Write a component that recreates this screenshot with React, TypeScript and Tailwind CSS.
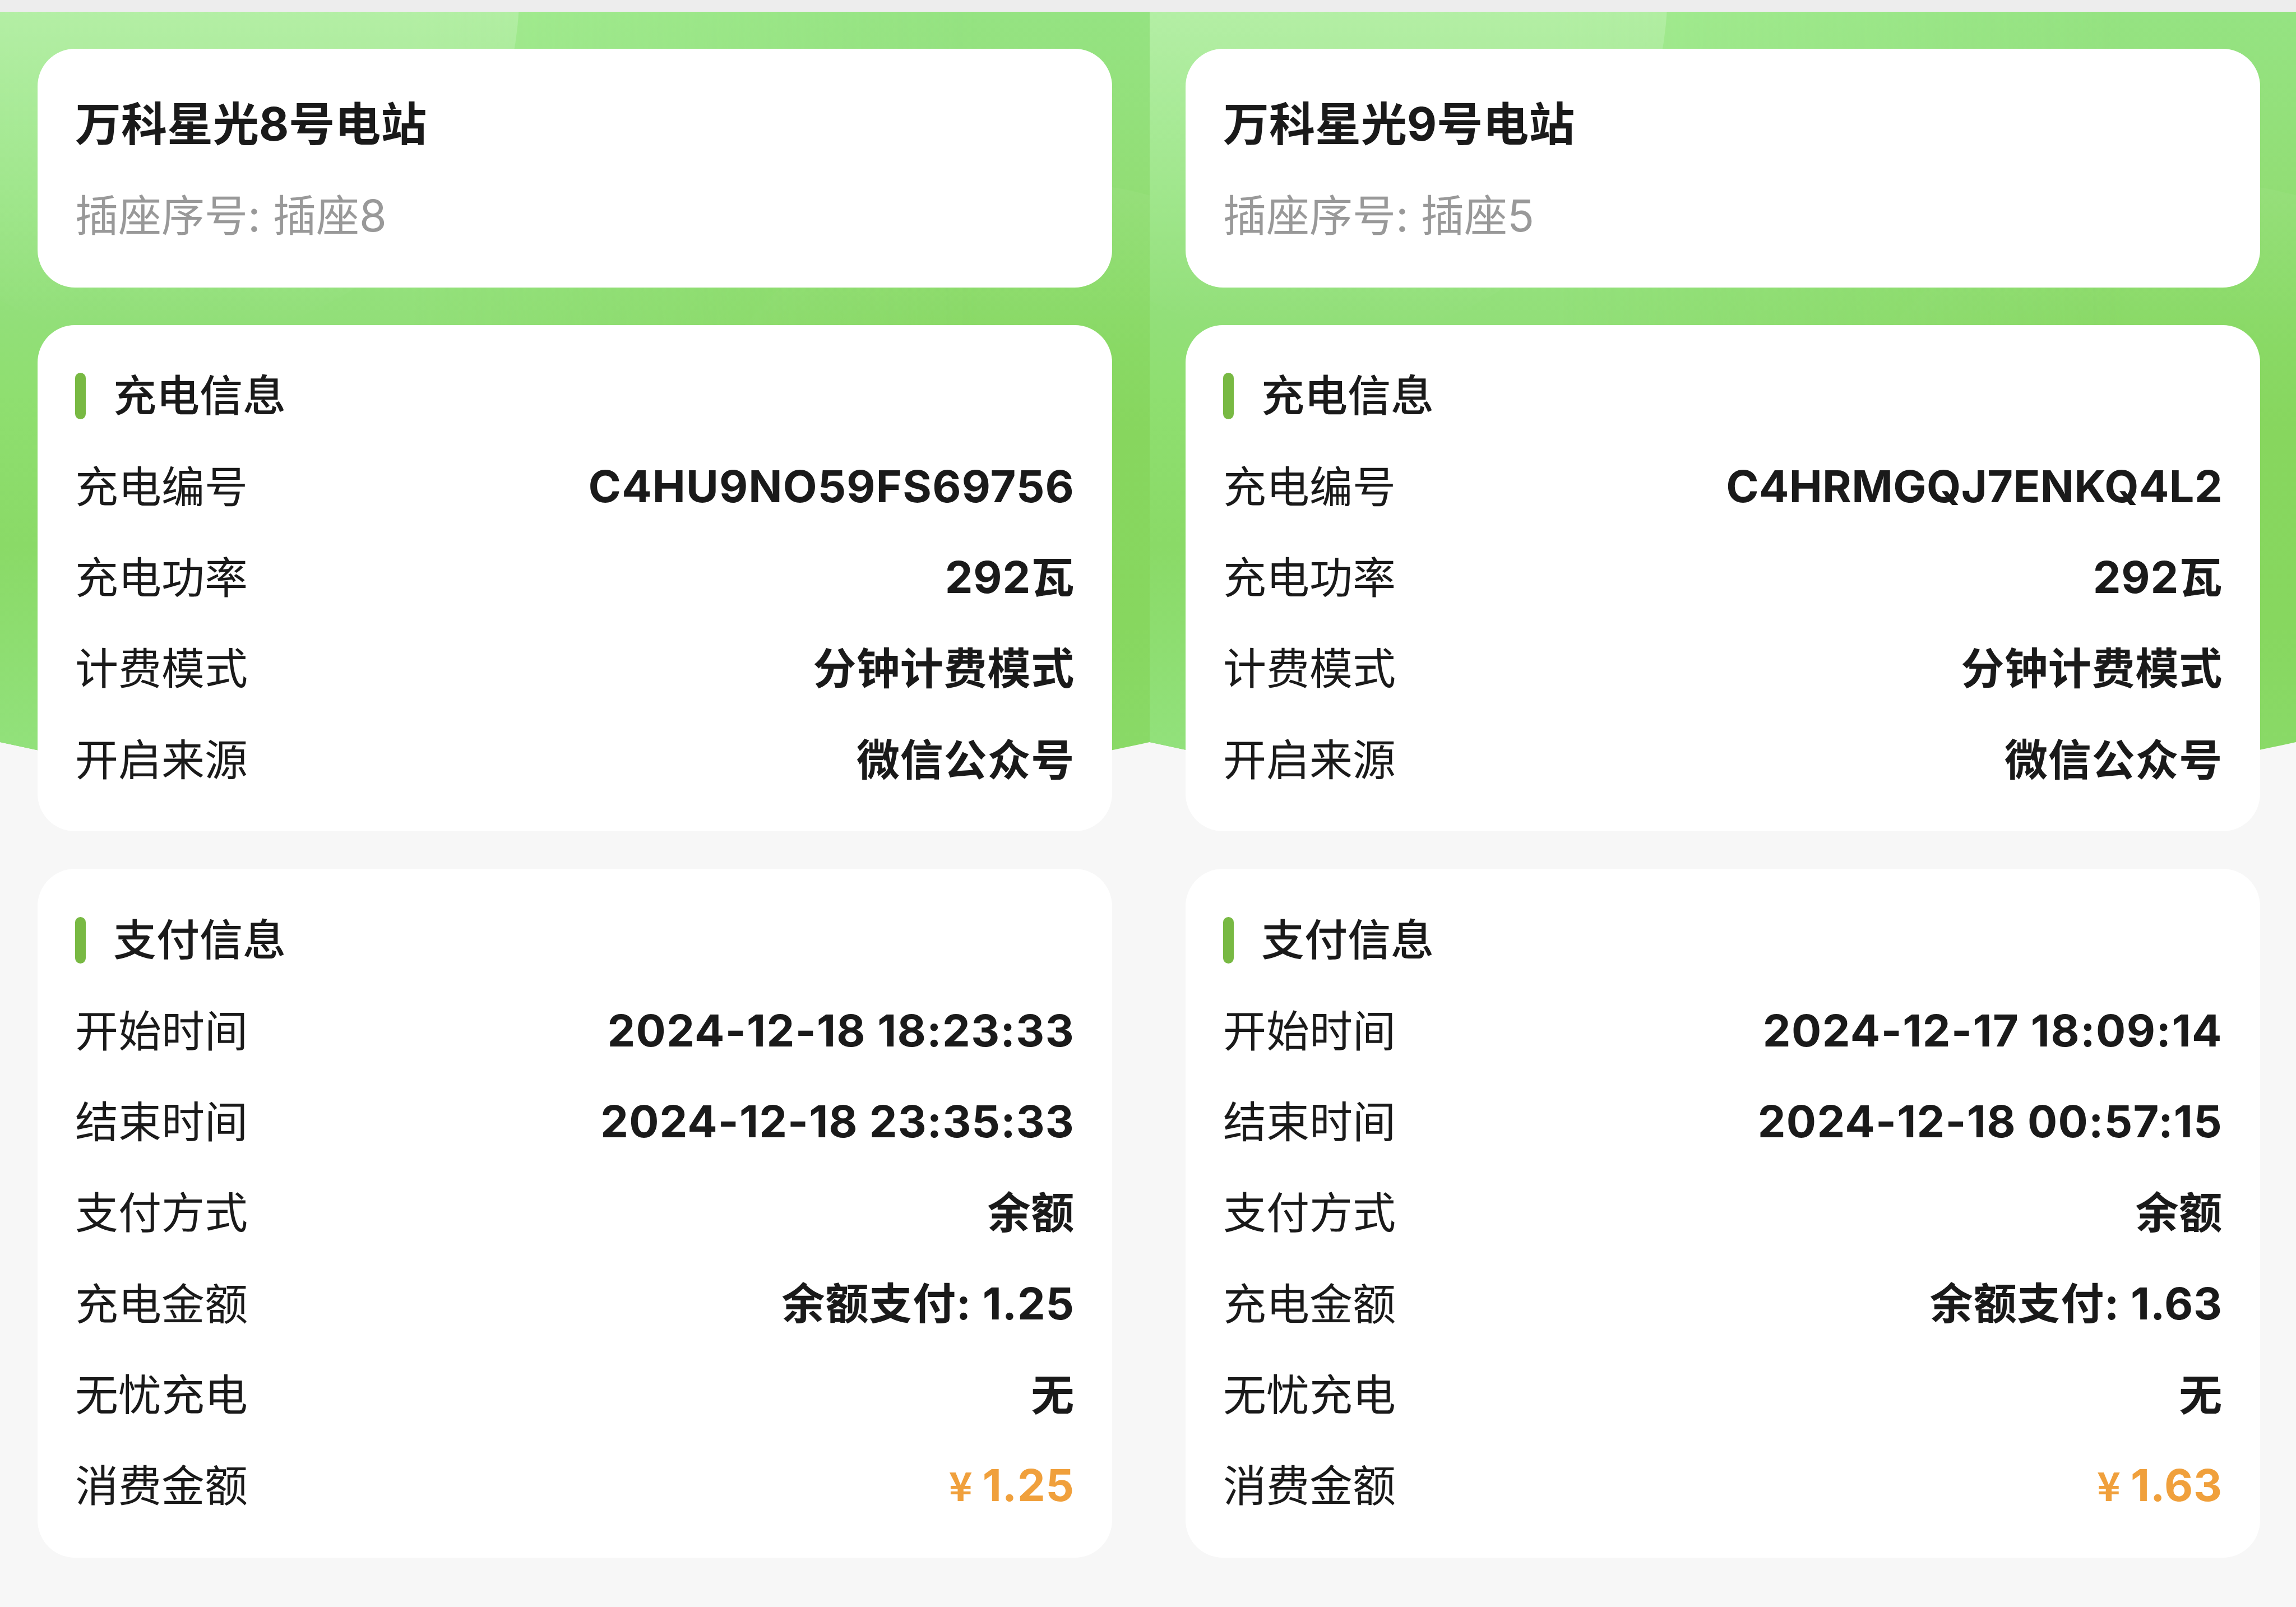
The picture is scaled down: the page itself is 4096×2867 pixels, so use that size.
type Row = { label: string; value: string; tracking?: string };
type Order = { station: string; socket: string; charge: Row[]; pay: Row[]; total: string };

const orders: Order[] = [
  {
    station: '万科星光8号电站',
    socket: '插座序号: 插座8',
    charge: [
      { label: '充电编号', value: 'C4HU9NO59FS69756', tracking: 'tracking-[1.15px]' },
      { label: '充电功率', value: '292瓦' },
      { label: '计费模式', value: '分钟计费模式' },
      { label: '开启来源', value: '微信公众号' },
    ],
    pay: [
      { label: '开始时间', value: '2024-12-18 18:23:33', tracking: 'tracking-[1.35px]' },
      { label: '结束时间', value: '2024-12-18 23:35:33', tracking: 'tracking-[1.15px]' },
      { label: '支付方式', value: '余额' },
      { label: '充电金额', value: '余额支付: 1.25' },
      { label: '无忧充电', value: '无' },
    ],
    total: '1.25',
  },
  {
    station: '万科星光9号电站',
    socket: '插座序号: 插座5',
    charge: [
      { label: '充电编号', value: 'C4HRMGQJ7ENKQ4L2', tracking: 'tracking-[0.35px]' },
      { label: '充电功率', value: '292瓦' },
      { label: '计费模式', value: '分钟计费模式' },
      { label: '开启来源', value: '微信公众号' },
    ],
    pay: [
      { label: '开始时间', value: '2024-12-17 18:09:14', tracking: 'tracking-[1.5px]' },
      { label: '结束时间', value: '2024-12-18 00:57:15', tracking: 'tracking-[1.3px]' },
      { label: '支付方式', value: '余额' },
      { label: '充电金额', value: '余额支付: 1.63' },
      { label: '无忧充电', value: '无' },
    ],
    total: '1.63',
  },
];

function Backdrop({ id }: { id: string }) {
  return (
    <svg className="absolute inset-x-0 top-0 h-[1362px] w-full" viewBox="0 0 2050 1362" preserveAspectRatio="none">
      <defs>
        <linearGradient id={`${id}-right`} x1="0" y1="0" x2="0" y2="1">
          <stop offset="0" stopColor="#95e382" />
          <stop offset="0.22" stopColor="#92de76" />
          <stop offset="0.4" stopColor="#8ada67" />
          <stop offset="0.55" stopColor="#87d65e" />
          <stop offset="0.8" stopColor="#87d75f" />
          <stop offset="1" stopColor="#8ada69" />
        </linearGradient>
        <linearGradient id={`${id}-left`} x1="0" y1="0" x2="0" y2="1">
          <stop offset="0" stopColor="#a3eb91" />
          <stop offset="0.22" stopColor="#99e584" />
          <stop offset="0.4" stopColor="#92df79" />
          <stop offset="0.5" stopColor="#8fdf70" />
          <stop offset="0.7" stopColor="#8ada67" />
          <stop offset="1" stopColor="#93e27e" />
        </linearGradient>
        <linearGradient id={`${id}-fade`} x1="0" y1="0" x2="1" y2="0">
          <stop offset="0.35" stopColor="#fff" />
          <stop offset="0.85" stopColor="#000" />
        </linearGradient>
        <linearGradient id={`${id}-glow`} gradientUnits="userSpaceOnUse" x1="0" y1="0" x2="0" y2="590">
          <stop offset="0" stopColor="#fff" stopOpacity="0.18" />
          <stop offset="0.25" stopColor="#fff" stopOpacity="0.13" />
          <stop offset="0.8" stopColor="#fff" stopOpacity="0.03" />
          <stop offset="0.95" stopColor="#fff" stopOpacity="0" />
        </linearGradient>
        <linearGradient id={`${id}-halo`} gradientUnits="userSpaceOnUse" x1="0" y1="300" x2="0" y2="620">
          <stop offset="0" stopColor="#fff" stopOpacity="0.04" />
          <stop offset="1" stopColor="#fff" stopOpacity="0" />
        </linearGradient>
        <mask id={`${id}-mask`}>
          <rect width="2050" height="1362" fill={`url(#${id}-fade)`} />
        </mask>
        <clipPath id={`${id}-clip`}>
          <path d="M0 0H2050V1303Q1025 1530 0 1303Z" />
        </clipPath>
      </defs>
      <g clipPath={`url(#${id}-clip)`}>
        <rect width="2050" height="1362" fill={`url(#${id}-right)`} />
        <rect width="2050" height="1362" fill={`url(#${id}-left)`} mask={`url(#${id}-mask)`} />
        <circle cx="298" cy="-38" r="628" fill={`url(#${id}-glow)`} />
        <circle cx="1867" cy="996" r="693" fill={`url(#${id}-halo)`} />
      </g>
    </svg>
  );
}

// Latin runs are set slightly larger than the Chinese characters around them.
function Mixed({ text, bold = false, tracking = 'tracking-[0.9px]' }: { text: string; bold?: boolean; tracking?: string }) {
  const runs = text.match(/[\x20-\x7e]+|[^\x20-\x7e]+/g) ?? [];
  return (
    <span className="flex items-baseline whitespace-pre">
      {runs.map((run, i) =>
        /^[\x20-\x7e]/.test(run) ? (
          <span key={i} className={bold ? `mb-[3px] text-[79px] font-bold ${tracking}` : 'text-[79px]'}>
            {run}
          </span>
        ) : (
          <span key={i} className={bold ? 'font-semibold tracking-[0.8px]' : ''}>
            {run}
          </span>
        ),
      )}
    </span>
  );
}

function SectionTitle({ text }: { text: string }) {
  return (
    <div className="flex h-[162.4px] items-center gap-[49px]">
      <span className="h-[83px] w-[19px] rounded-full bg-[#78b943]" />
      <h2 className="font-medium">{text}</h2>
    </div>
  );
}

function InfoRow({ label, value, tracking }: Row) {
  return (
    <div className="flex h-[162.4px] items-center justify-between">
      <span>{label}</span>
      <Mixed text={value} tracking={tracking} bold />
    </div>
  );
}

function Panel({ order, id, className }: { order: Order; id: string; className: string }) {
  return (
    <section className={`relative h-full ${className}`}>
      <Backdrop id={id} />
      <div className="relative flex flex-col gap-[67px]">
        <div className="h-[425.5px] rounded-[67px] bg-white px-[67px] pt-[54px]">
          <h1 className="flex h-[162.4px] items-center text-[82px] font-bold">{order.station}</h1>
          <p className="flex h-[162.4px] items-center text-[#999999]">
            <Mixed text={order.socket} />
          </p>
        </div>
        <div className="rounded-[67px] bg-white px-[67px] py-[46px]">
          <SectionTitle text="充电信息" />
          {order.charge.map((r) => (
            <InfoRow key={r.label} {...r} />
          ))}
        </div>
        <div className="rounded-[67px] bg-white px-[67px] py-[46px]">
          <SectionTitle text="支付信息" />
          {order.pay.map((r) => (
            <InfoRow key={r.label} {...r} />
          ))}
          <div className="flex h-[162.4px] items-center justify-between">
            <span>消费金额</span>
            <span className="mb-[4px] flex items-baseline gap-[18px] font-bold text-[#f0a03c]">
              <span className="font-['Noto_Sans_CJK_SC',sans-serif] text-[71px]">¥</span>
              <span className="text-[79px] tracking-[0.9px]">{order.total}</span>
            </span>
          </div>
        </div>
      </div>
    </section>
  );
}

export default function App() {
  return (
    <main className="flex h-[2867px] w-[4096px] flex-col overflow-hidden bg-[#f7f7f7] font-['Inter','Noto_Sans_CJK_SC',sans-serif] text-[77px] leading-none text-[#1a1a1a]">
      <div className="h-[21px] shrink-0 bg-[#ededed]" />
      <div className="flex grow">
        <Panel order={orders[0]} id="left" className="w-[2051px] pt-[66px] pr-[67px] pl-[67px]" />
        <Panel order={orders[1]} id="right" className="w-[2045px] pt-[66px] pr-[64px] pl-[64px]" />
      </div>
    </main>
  );
}
